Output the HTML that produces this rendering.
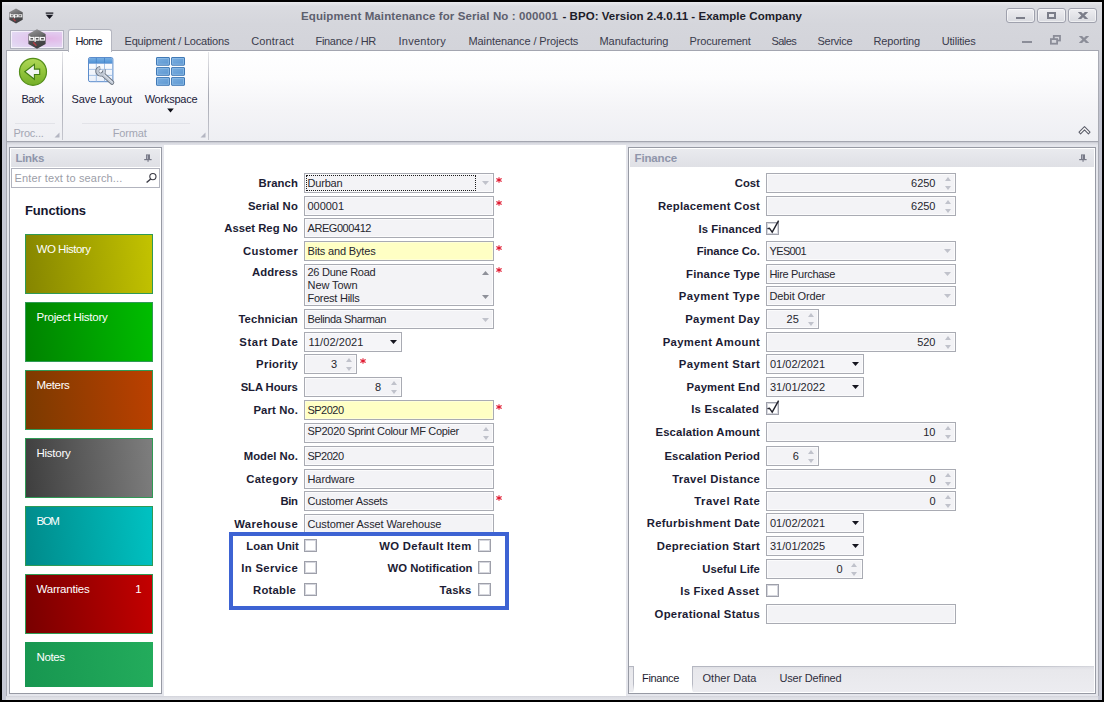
<!DOCTYPE html>
<html lang="en">
<head>
<meta charset="utf-8">
<title>Equipment Maintenance</title>
<style>
html,body{margin:0;padding:0;}
body{width:1104px;height:702px;background:#000;overflow:hidden;position:relative;font-family:"Liberation Sans",sans-serif;font-size:11px;}
.a{position:absolute;box-sizing:border-box;}
.t{position:absolute;white-space:pre;line-height:14px;font-family:"Liberation Sans",sans-serif;}
#win{left:2px;top:2px;width:1100px;height:698px;background:#d6d7dd;}
#titlegrad{left:2px;top:2px;width:1100px;height:48px;background:linear-gradient(#e9e9ed 0,#dadbe0 4px,#d5d6dc 22px,#d3d4da 48px);}
#frameL{left:2px;top:50px;width:4px;height:650px;background:linear-gradient(#cfd0d7 0,#c6c8d4 120px);}
#frameR{left:1098px;top:50px;width:4px;height:650px;background:linear-gradient(#cfd0d7 0,#c0c2ce 60px,#c6c8d4 300px);}
#under{left:6px;top:142px;width:1092px;height:558px;background:linear-gradient(#c6c8d0 0,#dadbe2 1.5px,#e5e6ec 3.5px);}
#ribbon{left:6px;top:50px;width:1093px;height:92px;background:linear-gradient(#ffffff 0,#fcfcfd 30%,#f4f4f7 65%,#eeeff3 100%);border:1px solid #a4a6b0;border-left-color:#a9abb4;border-right-color:#a9abb4;}
.gsep{top:52px;width:1px;height:88px;background:linear-gradient(rgba(170,172,182,0.3),#a8aab4 50%,rgba(170,172,182,0.6));}
.capline{height:1px;background:#e2e3e8;}
#hometab{left:68px;top:29px;width:44px;height:23px;background:#fff;border:1px solid #b4b6c0;border-bottom:none;border-radius:3px 3px 0 0;}
#appbtn{left:10px;top:30px;width:54px;height:19px;border:1px solid #b0b2be;background:radial-gradient(ellipse at 72% 45%,#e2b6e6 0,#e2c8ee 40%,#e2d6f2 75%,#e6e0f4 100%);box-shadow:inset 0 0 0 1px rgba(255,255,255,.65);}
.wbtn{top:8px;width:29px;height:15px;border:1px solid #9fa1ad;border-radius:3px;background:linear-gradient(#eeeef1,#d9dae0);box-shadow:inset 0 0 0 1px rgba(255,255,255,.55);}
.panel{background:#fff;border:1px solid #979aa4;}
.phead{background:linear-gradient(#e9eaee,#dfe0e5);}
#center{left:164px;top:145px;width:462px;height:551px;background:#fff;}
.f{position:absolute;box-sizing:border-box;height:20px;border:1px solid #a9abb3;background:#f3f3f6;box-shadow:inset 0 0 0 1px #fbfbfc;}
.f.y{background:#ffffc4;box-shadow:inset 0 0 0 1px #ffffd8;}
.f.d{background:#f5f5f8;}
.cb{position:absolute;box-sizing:border-box;width:13px;height:13px;border:1px solid #9ea0aa;background:#fff;box-shadow:inset 0 0 0 1px #d6d7de;}
.tile{position:absolute;box-sizing:border-box;left:25px;width:128px;height:60px;border:1px solid #2f9a55;}
svg{position:absolute;overflow:visible;}

</style>
</head>
<body>
<div class="a" id="win"></div>
<div class="a" id="titlegrad"></div>
<div class="a" id="frameL"></div><div class="a" id="frameR"></div>
<div class="a" id="under"></div>
<div class="a" style="left:6px;top:50px;width:1px;height:646px;background:#a9abb4"></div><div class="a" style="left:1098px;top:50px;width:1px;height:646px;background:#a9abb4"></div>
<div class="a" style="left:6px;top:696px;width:1092px;height:4px;background:linear-gradient(#cfd0d8 0,#dcdde3 1px,#e3e4e9 100%)"></div>
<svg style="left:9px;top:8px" width="14" height="16" viewBox="0 0 18 20"><defs><linearGradient id="hx9" x1="0" y1="0" x2="0.35" y2="1"><stop offset="0" stop-color="#929294"/><stop offset="0.38" stop-color="#666668"/><stop offset="0.62" stop-color="#4e4e50"/><stop offset="1" stop-color="#404042"/></linearGradient></defs><polygon points="9,0.2 17.6,5.1 17.6,14.9 9,19.8 0.4,14.9 0.4,5.1" fill="url(#hx9)"/><polygon points="9,0.2 17.6,5.1 9,9.6 0.4,5.1" fill="#ffffff" fill-opacity="0.10"/><g fill="none" stroke="#f6f6f6" stroke-width="1.15"><rect x="1.7" y="8.4" width="3.9" height="2.7"/><path d="M1.7,6.7 V11.1"/><rect x="7.1" y="8.4" width="3.9" height="2.7"/><path d="M7.1,8.4 V12.9"/><rect x="12.5" y="8.4" width="3.9" height="2.7"/></g><path d="M5.2,13.4 L8.4,16.8" stroke="#a83c42" stroke-width="1.6"/></svg>
<svg style="left:45px;top:12px" width="9" height="8" viewBox="0 0 9 8"><rect x="0.7" y="0.5" width="7.6" height="1.2" fill="#0c0c14"/><polygon points="0.8,2.8 8.2,2.8 4.5,7" fill="#15151f"/></svg>
<span class="t" style="left:301.00px;top:8.82px;font-size:11.5px;color:#5d5f6e;font-weight:bold;letter-spacing:0.104px;">Equipment Maintenance for Serial No : 000001</span>
<span class="t" style="left:562.50px;top:8.82px;font-size:11.5px;color:#1d1d2a;font-weight:bold;letter-spacing:0.042px;">- BPO: Version 2.4.0.11 - Example Company</span>
<div class="a wbtn" style="left:1006px"></div>
<div class="a wbtn" style="left:1037px"></div>
<div class="a wbtn" style="left:1068px"></div>
<div class="a" style="left:1016px;top:17px;width:9px;height:2px;background:#7b7d89"></div>
<div class="a" style="left:1047px;top:12px;width:9px;height:7px;border:2px solid #7b7d89"></div>
<svg style="left:1078px;top:12px;overflow:hidden" width="10" height="7" viewBox="0 0 10 7"><path d="M0.4,-1 L9.6,8 M9.6,-1 L0.4,8" stroke="#7b7d89" stroke-width="2.5"/></svg>
<div class="a" style="left:1022px;top:41px;width:10px;height:2px;background:#8b8d98"></div>
<svg style="left:1050px;top:35px" width="11" height="10" viewBox="0 0 11 10"><rect x="3.8" y="0.9" width="6.2" height="4.6" fill="none" stroke="#8b8d98" stroke-width="1.8"/><rect x="0.9" y="4.1" width="6.2" height="4.6" fill="#d5d6dc" stroke="#8b8d98" stroke-width="1.8"/></svg>
<svg style="left:1079px;top:36px;overflow:hidden" width="10" height="7" viewBox="0 0 10 7"><path d="M0.4,-1 L9.6,8 M9.6,-1 L0.4,8" stroke="#8b8d98" stroke-width="2.3"/></svg>
<div class="a" id="ribbon"></div>
<div class="a" id="appbtn"></div>
<svg style="left:28px;top:29px" width="18" height="20" viewBox="0 0 18 20"><defs><linearGradient id="hx28" x1="0" y1="0" x2="0.35" y2="1"><stop offset="0" stop-color="#929294"/><stop offset="0.38" stop-color="#666668"/><stop offset="0.62" stop-color="#4e4e50"/><stop offset="1" stop-color="#404042"/></linearGradient></defs><polygon points="9,0.2 17.6,5.1 17.6,14.9 9,19.8 0.4,14.9 0.4,5.1" fill="url(#hx28)"/><polygon points="9,0.2 17.6,5.1 9,9.6 0.4,5.1" fill="#ffffff" fill-opacity="0.10"/><g fill="none" stroke="#f6f6f6" stroke-width="1.15"><rect x="1.7" y="8.4" width="3.9" height="2.7"/><path d="M1.7,6.7 V11.1"/><rect x="7.1" y="8.4" width="3.9" height="2.7"/><path d="M7.1,8.4 V12.9"/><rect x="12.5" y="8.4" width="3.9" height="2.7"/></g><path d="M5.2,13.4 L8.4,16.8" stroke="#a83c42" stroke-width="1.6"/></svg>
<div class="a" id="hometab"></div>
<span class="t" style="left:75.50px;top:33.69px;font-size:11px;color:#14142a;letter-spacing:-0.711px;">Home</span>
<span class="t" style="left:124.50px;top:33.69px;font-size:11px;color:#3a3b4c;letter-spacing:-0.196px;">Equipment / Locations</span>
<span class="t" style="left:251.25px;top:33.69px;font-size:11px;color:#3a3b4c;letter-spacing:0.146px;">Contract</span>
<span class="t" style="left:315.50px;top:33.69px;font-size:11px;color:#3a3b4c;letter-spacing:-0.309px;">Finance / HR</span>
<span class="t" style="left:398.50px;top:33.69px;font-size:11px;color:#3a3b4c;letter-spacing:0.250px;">Inventory</span>
<span class="t" style="left:468.50px;top:33.69px;font-size:11px;color:#3a3b4c;letter-spacing:-0.097px;">Maintenance / Projects</span>
<span class="t" style="left:599.50px;top:33.69px;font-size:11px;color:#3a3b4c;letter-spacing:-0.075px;">Manufacturing</span>
<span class="t" style="left:689.50px;top:33.69px;font-size:11px;color:#3a3b4c;letter-spacing:-0.158px;">Procurement</span>
<span class="t" style="left:771.50px;top:33.69px;font-size:11px;color:#3a3b4c;letter-spacing:-0.556px;">Sales</span>
<span class="t" style="left:817.50px;top:33.69px;font-size:11px;color:#3a3b4c;letter-spacing:-0.277px;">Service</span>
<span class="t" style="left:873.50px;top:33.69px;font-size:11px;color:#3a3b4c;letter-spacing:-0.134px;">Reporting</span>
<span class="t" style="left:941.75px;top:33.69px;font-size:11px;color:#3a3b4c;letter-spacing:-0.189px;">Utilities</span>
<div class="a gsep" style="left:62px"></div>
<div class="a gsep" style="left:208px"></div>
<div class="a capline" style="left:15px;top:123px;width:40px"></div>
<div class="a capline" style="left:82px;top:123px;width:108px"></div>
<span class="t" style="left:13.50px;top:125.69px;font-size:11px;color:#a3a6b3;letter-spacing:-0.257px;">Proc...</span>
<span class="t" style="left:112.70px;top:125.69px;font-size:11px;color:#a3a6b3;letter-spacing:-0.141px;">Format</span>
<svg style="left:54px;top:132px" width="6" height="6" viewBox="0 0 6 6"><polygon points="5.5,0.5 5.5,5.5 0.5,5.5" fill="#b4b6c2"/></svg>
<svg style="left:200px;top:132px" width="6" height="6" viewBox="0 0 6 6"><polygon points="5.5,0.5 5.5,5.5 0.5,5.5" fill="#b4b6c2"/></svg>
<svg style="left:18px;top:57px" width="30" height="30" viewBox="0 0 30 30">
<defs><linearGradient id="gb" x1="0" y1="0" x2="0" y2="1"><stop offset="0" stop-color="#b0d858"/><stop offset="0.5" stop-color="#92c43c"/><stop offset="1" stop-color="#74ae28"/></linearGradient></defs>
<circle cx="15" cy="14.8" r="13.5" fill="url(#gb)" stroke="#548e1a" stroke-width="1.2"/>
<path d="M6.8,14.8 L16.4,7.4 L16.4,12.1 L21.7,12.1 L21.7,17.5 L16.4,17.5 L16.4,22.3 Z" fill="#f2f5f4" stroke="#3f7c12" stroke-width="1.1" stroke-linejoin="miter"/>
</svg>
<span class="t" style="left:21.50px;top:91.79px;font-size:11px;color:#1b1b3a;letter-spacing:-0.567px;">Back</span>
<svg style="left:88px;top:57px" width="30" height="30" viewBox="0 0 30 30">
<defs><linearGradient id="gh" x1="0" y1="0" x2="0" y2="1"><stop offset="0" stop-color="#78aee2"/><stop offset="1" stop-color="#4f92d6"/></linearGradient>
<linearGradient id="gc" x1="0" y1="0" x2="0" y2="1"><stop offset="0" stop-color="#ffffff"/><stop offset="1" stop-color="#eaf0fa"/></linearGradient></defs>
<rect x="0.5" y="0.5" width="24.4" height="24.2" rx="1.6" fill="url(#gc)" stroke="#5b8ccc"/>
<path d="M1,2 Q1,1 2,1 H23.4 Q24.4,1 24.4,2 V6.2 H1 Z" fill="url(#gh)"/>
<path d="M8.3,6.2 V24.4 M16.5,6.2 V24.4 M1,12.4 H24.4 M1,18.4 H24.4" stroke="#9dbbe2" stroke-width="0.9" fill="none"/>
<path d="M8.3,1 V6.2 M16.5,1 V6.2" stroke="#4684c8" stroke-width="0.9"/>
<path d="M1,6.4 H24.4" stroke="#6d9cd4" stroke-width="0.8"/>
<path d="M15.0,17.4 L24.0,25.5" stroke="#68707c" stroke-width="4.5" stroke-linecap="round"/>
<path d="M15.80,13.04 A3.4,3.4 0 1 1 12.24,10.82" fill="none" stroke="#68707c" stroke-width="3.9"/>
<path d="M15.0,17.4 L24.0,25.5" stroke="#c2cad6" stroke-width="2.9" stroke-linecap="round"/>
<path d="M15.9,12.7 A3.4,3.4 0 1 1 11.9,10.9" fill="none" stroke="#c2cad6" stroke-width="2.5"/>
<path d="M16.4,18.0 L24.3,25.1" stroke="#e4e9f0" stroke-width="0.9" stroke-linecap="round"/>
</svg>
<span class="t" style="left:71.50px;top:91.79px;font-size:11px;color:#1b1b3a;letter-spacing:-0.060px;">Save Layout</span>
<svg style="left:156px;top:57px" width="30" height="30" viewBox="0 0 30 30"><defs><linearGradient id="gw" x1="0" y1="0" x2="1" y2="1"><stop offset="0" stop-color="#7aaee0"/><stop offset="1" stop-color="#5c96d0"/></linearGradient></defs><rect x="0.5" y="0.5" width="12.9" height="7.7" rx="0.4" fill="url(#gw)" stroke="#4079b6" stroke-width="1"/><rect x="1.5" y="1.5" width="10.9" height="5.7" fill="none" stroke="#a6cdf0" stroke-opacity="0.55" stroke-width="0.9"/><rect x="0.5" y="10.6" width="12.9" height="7.7" rx="0.4" fill="url(#gw)" stroke="#4079b6" stroke-width="1"/><rect x="1.5" y="11.6" width="10.9" height="5.7" fill="none" stroke="#a6cdf0" stroke-opacity="0.55" stroke-width="0.9"/><rect x="0.5" y="20.6" width="12.9" height="7.7" rx="0.4" fill="url(#gw)" stroke="#4079b6" stroke-width="1"/><rect x="1.5" y="21.6" width="10.9" height="5.7" fill="none" stroke="#a6cdf0" stroke-opacity="0.55" stroke-width="0.9"/><rect x="15.6" y="0.5" width="12.9" height="7.7" rx="0.4" fill="url(#gw)" stroke="#4079b6" stroke-width="1"/><rect x="16.6" y="1.5" width="10.9" height="5.7" fill="none" stroke="#a6cdf0" stroke-opacity="0.55" stroke-width="0.9"/><rect x="15.6" y="10.6" width="12.9" height="7.7" rx="0.4" fill="url(#gw)" stroke="#4079b6" stroke-width="1"/><rect x="16.6" y="11.6" width="10.9" height="5.7" fill="none" stroke="#a6cdf0" stroke-opacity="0.55" stroke-width="0.9"/><rect x="15.6" y="20.6" width="12.9" height="7.7" rx="0.4" fill="url(#gw)" stroke="#4079b6" stroke-width="1"/><rect x="16.6" y="21.6" width="10.9" height="5.7" fill="none" stroke="#a6cdf0" stroke-opacity="0.55" stroke-width="0.9"/></svg>
<span class="t" style="left:144.70px;top:91.79px;font-size:11px;color:#1b1b3a;letter-spacing:-0.248px;">Workspace</span>
<svg style="left:167px;top:108px" width="7" height="5" viewBox="0 0 7 5"><polygon points="0.2,0.6 6.8,0.6 3.5,4.4" fill="#101018"/></svg>
<svg style="left:1078px;top:125px" width="13" height="11" viewBox="0 0 13 11"><path d="M1,7.2 L6.5,1.6 L12,7.2 L10.4,8.8 L6.5,4.9 L2.6,8.8 Z" fill="#fff" stroke="#5c5e6a" stroke-width="1.1" stroke-linejoin="round"/></svg>
<div class="a panel" style="left:9px;top:147px;width:153px;height:547px"></div>
<div class="a phead" style="left:11px;top:149px;width:149px;height:18px"></div>
<span class="t" style="left:15.50px;top:151.02px;font-size:11.5px;color:#8f95aa;font-weight:bold;letter-spacing:-0.309px;">Links</span>
<svg style="left:143.4px;top:153.4px" width="10" height="10" viewBox="0 0 10 10"><rect x="3" y="1.4" width="4" height="4.8" fill="#777987"/><rect x="3.9" y="2.3" width="1.0" height="3.7" fill="#b2b4c0"/><rect x="1.2" y="6" width="7.4" height="1.2" fill="#777987"/><rect x="4.5" y="7" width="1.1" height="1.8" fill="#777987"/></svg>
<div class="a" style="left:11px;top:168px;width:149px;height:20px;border:1px solid #b2b4be;background:#fff"></div>
<span class="t" style="left:14.50px;top:171.19px;font-size:11px;color:#9c9ea8;letter-spacing:0.149px;">Enter text to search...</span>
<svg style="left:145px;top:171px" width="13" height="13" viewBox="0 0 13 13"><circle cx="7.9" cy="5.6" r="3.1" fill="none" stroke="#3a3a44" stroke-width="1.1"/><path d="M5.7,7.9 L1.6,11.6" stroke="#3a3a44" stroke-width="1.4"/></svg>
<span class="t" style="left:25.00px;top:203.60px;font-size:13px;color:#15152e;font-weight:bold;letter-spacing:-0.145px;">Functions</span>
<div class="tile" style="top:234px;height:60px;background:linear-gradient(84deg,#858500,#c3c300);"></div>
<span class="t" style="left:36.50px;top:242.02px;font-size:11.5px;color:#fff;letter-spacing:-0.478px;">WO History</span>
<div class="tile" style="top:302px;height:60px;background:linear-gradient(84deg,#008200,#00bd00);"></div>
<span class="t" style="left:36.50px;top:310.02px;font-size:11.5px;color:#fff;letter-spacing:-0.252px;">Project History</span>
<div class="tile" style="top:370px;height:60px;background:linear-gradient(84deg,#7a3a00,#bc4000);"></div>
<span class="t" style="left:36.50px;top:378.02px;font-size:11.5px;color:#fff;letter-spacing:-0.359px;">Meters</span>
<div class="tile" style="top:438px;height:60px;background:linear-gradient(84deg,#3e3e3e,#7e7e7e);"></div>
<span class="t" style="left:36.50px;top:446.02px;font-size:11.5px;color:#fff;letter-spacing:-0.254px;">History</span>
<div class="tile" style="top:506px;height:60px;background:linear-gradient(84deg,#008a8a,#00c2c2);"></div>
<span class="t" style="left:36.50px;top:514.02px;font-size:11.5px;color:#fff;letter-spacing:-1.401px;">BOM</span>
<div class="tile" style="top:574px;height:60px;background:linear-gradient(84deg,#780000,#c40000);"></div>
<span class="t" style="left:36.50px;top:582.02px;font-size:11.5px;color:#fff;letter-spacing:-0.217px;">Warranties</span>
<div class="tile" style="top:642px;height:45px;background:linear-gradient(84deg,#179650,#23ac5c);border:none;"></div>
<span class="t" style="left:36.50px;top:650.02px;font-size:11.5px;color:#fff;letter-spacing:-0.409px;">Notes</span>
<span class="t" style="left:135.30px;top:582.02px;font-size:11.5px;color:#fff;">1</span>
<div class="a" id="center"></div>
<span class="t" style="left:258.40px;top:175.78px;font-size:11.3px;color:#1c1c34;font-weight:bold;letter-spacing:0.096px;">Branch</span>
<div class="f " style="left:304px;top:173px;width:190px;height:20px"></div>
<span class="t" style="left:307.50px;top:175.89px;font-size:11px;color:#26262e;letter-spacing:-0.180px;">Durban</span>
<div class="a" style="left:306px;top:175px;width:170px;height:16px;border:1px dotted #1a1a1a"></div>
<svg style="left:482.0px;top:181.0px" width="7" height="4" viewBox="0 0 7 4"><polygon points="0,0 7,0 3.5,4" fill="#c0c2cb"/></svg>
<svg style="left:496.4px;top:177.2px" width="6" height="6" viewBox="0 0 7 7"><path d="M3.5,0.2 V6.8 M0.4,1.8 L6.6,5.2 M6.6,1.8 L0.4,5.2" stroke="#e01c32" stroke-width="1.25"/></svg>
<span class="t" style="left:247.91px;top:198.78px;font-size:11.3px;color:#1c1c34;font-weight:bold;letter-spacing:0.113px;">Serial No</span>
<div class="f " style="left:304px;top:196px;width:190px;height:20px"></div>
<span class="t" style="left:307.50px;top:198.89px;font-size:11px;color:#26262e;letter-spacing:-0.036px;">000001</span>
<svg style="left:496.4px;top:199.7px" width="6" height="6" viewBox="0 0 7 7"><path d="M3.5,0.2 V6.8 M0.4,1.8 L6.6,5.2 M6.6,1.8 L0.4,5.2" stroke="#e01c32" stroke-width="1.25"/></svg>
<span class="t" style="left:224.30px;top:220.78px;font-size:11.3px;color:#1c1c34;font-weight:bold;">Asset Reg No</span>
<div class="f " style="left:304px;top:218px;width:190px;height:20px"></div>
<span class="t" style="left:307.50px;top:220.89px;font-size:11px;color:#26262e;letter-spacing:-0.439px;">AREG000412</span>
<span class="t" style="left:243.08px;top:243.78px;font-size:11.3px;color:#1c1c34;font-weight:bold;letter-spacing:0.283px;">Customer</span>
<div class="f y" style="left:304px;top:241px;width:190px;height:20px"></div>
<span class="t" style="left:307.50px;top:243.89px;font-size:11px;color:#26262e;letter-spacing:-0.166px;">Bits and Bytes</span>
<svg style="left:496.4px;top:245.2px" width="6" height="6" viewBox="0 0 7 7"><path d="M3.5,0.2 V6.8 M0.4,1.8 L6.6,5.2 M6.6,1.8 L0.4,5.2" stroke="#e01c32" stroke-width="1.25"/></svg>
<span class="t" style="left:251.91px;top:265.38px;font-size:11.3px;color:#1c1c34;font-weight:bold;letter-spacing:0.112px;">Address</span>
<div class="f" style="left:304px;top:264px;width:190px;height:42px"></div>
<span class="t" style="left:307.50px;top:264.99px;font-size:11px;color:#26262e;letter-spacing:-0.246px;">26 Dune Road</span>
<span class="t" style="left:307.50px;top:277.99px;font-size:11px;color:#26262e;letter-spacing:-0.068px;">New Town</span>
<span class="t" style="left:307.50px;top:290.99px;font-size:11px;color:#26262e;letter-spacing:-0.251px;">Forest Hills</span>
<svg style="left:481.5px;top:271.0px" width="7" height="4" viewBox="0 0 7 4"><polygon points="0,4 7,4 3.5,0" fill="#8e9099"/></svg>
<svg style="left:481.5px;top:294.5px" width="7" height="4" viewBox="0 0 7 4"><polygon points="0,0 7,0 3.5,4" fill="#8e9099"/></svg>
<svg style="left:496.4px;top:267.2px" width="6" height="6" viewBox="0 0 7 7"><path d="M3.5,0.2 V6.8 M0.4,1.8 L6.6,5.2 M6.6,1.8 L0.4,5.2" stroke="#e01c32" stroke-width="1.25"/></svg>
<span class="t" style="left:238.43px;top:311.78px;font-size:11.3px;color:#1c1c34;font-weight:bold;letter-spacing:0.131px;">Technician</span>
<div class="f " style="left:304px;top:309px;width:190px;height:20px"></div>
<span class="t" style="left:307.50px;top:311.89px;font-size:11px;color:#26262e;letter-spacing:-0.393px;">Belinda Sharman</span>
<svg style="left:482.0px;top:317.5px" width="7" height="4" viewBox="0 0 7 4"><polygon points="0,0 7,0 3.5,4" fill="#c0c2cb"/></svg>
<span class="t" style="left:239.36px;top:334.78px;font-size:11.3px;color:#1c1c34;font-weight:bold;letter-spacing:0.562px;">Start Date</span>
<div class="f d" style="left:304px;top:332px;width:98px;height:20px"></div>
<span class="t" style="left:308.50px;top:334.89px;font-size:11px;color:#26262e;letter-spacing:0.075px;">11/02/2021</span>
<svg style="left:389.5px;top:340.0px" width="7" height="4" viewBox="0 0 7 4"><polygon points="0,0 7,0 3.5,4" fill="#15151f"/></svg>
<span class="t" style="left:256.10px;top:356.78px;font-size:11.3px;color:#1c1c34;font-weight:bold;letter-spacing:0.305px;">Priority</span>
<div class="f " style="left:304px;top:354px;width:53px;height:20px"></div>
<span class="t" style="left:330.88px;top:356.89px;font-size:11px;color:#26262e;">3</span>
<svg style="left:345.5px;top:357.5px" width="6" height="4" viewBox="0 0 6 4"><polygon points="0,4 6,4 3.0,0" fill="#c0c2cb"/></svg><svg style="left:345.5px;top:366.5px" width="6" height="4" viewBox="0 0 6 4"><polygon points="0,0 6,0 3.0,4" fill="#c0c2cb"/></svg>
<svg style="left:359.9px;top:358.2px" width="6" height="6" viewBox="0 0 7 7"><path d="M3.5,0.2 V6.8 M0.4,1.8 L6.6,5.2 M6.6,1.8 L0.4,5.2" stroke="#e01c32" stroke-width="1.25"/></svg>
<span class="t" style="left:240.69px;top:379.78px;font-size:11.3px;color:#1c1c34;font-weight:bold;letter-spacing:-0.106px;">SLA Hours</span>
<div class="f " style="left:304px;top:377px;width:98px;height:20px"></div>
<span class="t" style="left:374.88px;top:379.89px;font-size:11px;color:#26262e;">8</span>
<svg style="left:390.8px;top:380.5px" width="6" height="4" viewBox="0 0 6 4"><polygon points="0,4 6,4 3.0,0" fill="#c0c2cb"/></svg><svg style="left:390.8px;top:389.5px" width="6" height="4" viewBox="0 0 6 4"><polygon points="0,0 6,0 3.0,4" fill="#c0c2cb"/></svg>
<span class="t" style="left:253.45px;top:402.78px;font-size:11.3px;color:#1c1c34;font-weight:bold;letter-spacing:0.148px;">Part No.</span>
<div class="f y" style="left:304px;top:400px;width:190px;height:20px"></div>
<span class="t" style="left:307.50px;top:402.89px;font-size:11px;color:#26262e;letter-spacing:-0.526px;">SP2020</span>
<svg style="left:496.4px;top:404.2px" width="6" height="6" viewBox="0 0 7 7"><path d="M3.5,0.2 V6.8 M0.4,1.8 L6.6,5.2 M6.6,1.8 L0.4,5.2" stroke="#e01c32" stroke-width="1.25"/></svg>
<div class="f " style="left:304px;top:423px;width:190px;height:20px"></div>
<span class="t" style="left:307.50px;top:424.49px;font-size:11px;color:#26262e;letter-spacing:-0.317px;">SP2020 Sprint Colour MF Copier</span>
<svg style="left:482.5px;top:426.5px" width="6" height="4" viewBox="0 0 6 4"><polygon points="0,4 6,4 3.0,0" fill="#c0c2cb"/></svg><svg style="left:482.5px;top:435.5px" width="6" height="4" viewBox="0 0 6 4"><polygon points="0,0 6,0 3.0,4" fill="#c0c2cb"/></svg>
<span class="t" style="left:243.80px;top:448.78px;font-size:11.3px;color:#1c1c34;font-weight:bold;">Model No.</span>
<div class="f " style="left:304px;top:446px;width:190px;height:20px"></div>
<span class="t" style="left:307.50px;top:448.89px;font-size:11px;color:#26262e;letter-spacing:-0.526px;">SP2020</span>
<span class="t" style="left:246.18px;top:471.78px;font-size:11.3px;color:#1c1c34;font-weight:bold;letter-spacing:0.379px;">Category</span>
<div class="f " style="left:304px;top:469px;width:190px;height:20px"></div>
<span class="t" style="left:307.50px;top:471.89px;font-size:11px;color:#26262e;letter-spacing:-0.086px;">Hardware</span>
<span class="t" style="left:280.40px;top:493.78px;font-size:11.3px;color:#1c1c34;font-weight:bold;letter-spacing:-0.401px;">Bin</span>
<div class="f " style="left:304px;top:491px;width:190px;height:20px"></div>
<span class="t" style="left:307.50px;top:493.89px;font-size:11px;color:#26262e;letter-spacing:-0.209px;">Customer Assets</span>
<svg style="left:496.4px;top:494.7px" width="6" height="6" viewBox="0 0 7 7"><path d="M3.5,0.2 V6.8 M0.4,1.8 L6.6,5.2 M6.6,1.8 L0.4,5.2" stroke="#e01c32" stroke-width="1.25"/></svg>
<span class="t" style="left:234.19px;top:516.78px;font-size:11.3px;color:#1c1c34;font-weight:bold;letter-spacing:0.391px;">Warehouse</span>
<div class="f " style="left:304px;top:514px;width:190px;height:20px"></div>
<span class="t" style="left:307.50px;top:516.89px;font-size:11px;color:#26262e;letter-spacing:-0.114px;">Customer Asset Warehouse</span>
<span class="t" style="left:246.35px;top:538.88px;font-size:11.3px;color:#1c1c34;font-weight:bold;letter-spacing:0.045px;">Loan Unit</span>
<div class="cb" style="left:304px;top:539px"></div>
<span class="t" style="left:379.15px;top:538.88px;font-size:11.3px;color:#1c1c34;font-weight:bold;letter-spacing:0.350px;">WO Default Item</span>
<div class="cb" style="left:478px;top:539px"></div>
<span class="t" style="left:241.33px;top:560.88px;font-size:11.3px;color:#1c1c34;font-weight:bold;letter-spacing:0.331px;">In Service</span>
<div class="cb" style="left:304px;top:561px"></div>
<span class="t" style="left:387.52px;top:560.88px;font-size:11.3px;color:#1c1c34;font-weight:bold;letter-spacing:0.019px;">WO Notification</span>
<div class="cb" style="left:478px;top:561px"></div>
<span class="t" style="left:253.02px;top:582.88px;font-size:11.3px;color:#1c1c34;font-weight:bold;letter-spacing:0.223px;">Rotable</span>
<div class="cb" style="left:304px;top:583px"></div>
<span class="t" style="left:439.62px;top:582.88px;font-size:11.3px;color:#1c1c34;font-weight:bold;letter-spacing:0.119px;">Tasks</span>
<div class="cb" style="left:478px;top:583px"></div>
<div class="a" style="left:229px;top:532px;width:280px;height:78px;border:4px solid #3d63d3"></div>
<div class="a panel" style="left:628px;top:147px;width:468px;height:547px"></div>
<div class="a phead" style="left:630px;top:149px;width:464px;height:18px"></div>
<span class="t" style="left:634.50px;top:151.02px;font-size:11.5px;color:#8f95aa;font-weight:bold;letter-spacing:-0.138px;">Finance</span>
<svg style="left:1078px;top:153px" width="10" height="10" viewBox="0 0 10 10"><rect x="3" y="1.4" width="4" height="4.8" fill="#777987"/><rect x="3.9" y="2.3" width="1.0" height="3.7" fill="#b2b4c0"/><rect x="1.2" y="6" width="7.4" height="1.2" fill="#777987"/><rect x="4.5" y="7" width="1.1" height="1.8" fill="#777987"/></svg>
<span class="t" style="left:734.77px;top:175.78px;font-size:11.3px;color:#1c1c34;font-weight:bold;letter-spacing:-0.027px;">Cost</span>
<div class="f " style="left:766px;top:173px;width:190px;height:20px"></div>
<span class="t" style="left:911.02px;top:175.89px;font-size:11px;color:#26262e;">6250</span>
<svg style="left:944.5px;top:176.5px" width="6" height="4" viewBox="0 0 6 4"><polygon points="0,4 6,4 3.0,0" fill="#c0c2cb"/></svg><svg style="left:944.5px;top:185.5px" width="6" height="4" viewBox="0 0 6 4"><polygon points="0,0 6,0 3.0,4" fill="#c0c2cb"/></svg>
<span class="t" style="left:658.01px;top:198.78px;font-size:11.3px;color:#1c1c34;font-weight:bold;letter-spacing:0.215px;">Replacement Cost</span>
<div class="f " style="left:766px;top:196px;width:190px;height:20px"></div>
<span class="t" style="left:911.02px;top:198.89px;font-size:11px;color:#26262e;">6250</span>
<svg style="left:944.5px;top:199.5px" width="6" height="4" viewBox="0 0 6 4"><polygon points="0,4 6,4 3.0,0" fill="#c0c2cb"/></svg><svg style="left:944.5px;top:208.5px" width="6" height="4" viewBox="0 0 6 4"><polygon points="0,0 6,0 3.0,4" fill="#c0c2cb"/></svg>
<span class="t" style="left:698.58px;top:221.58px;font-size:11.3px;color:#1c1c34;font-weight:bold;letter-spacing:0.077px;">Is Financed</span>
<div class="cb" style="left:766px;top:222px"></div>
<svg style="left:766px;top:220px" width="16" height="16" viewBox="0 0 16 16"><path d="M1.4,8.6 L3.4,8.2 L6.2,12.2 L12.6,0.6" fill="none" stroke="#22222c" stroke-width="1.4" stroke-linejoin="miter"/></svg>
<span class="t" style="left:696.71px;top:243.78px;font-size:11.3px;color:#1c1c34;font-weight:bold;letter-spacing:-0.094px;">Finance Co.</span>
<div class="f " style="left:766px;top:241px;width:190px;height:20px"></div>
<span class="t" style="left:769.50px;top:243.89px;font-size:11px;color:#26262e;letter-spacing:-0.646px;">YES001</span>
<svg style="left:944.0px;top:249.0px" width="7" height="4" viewBox="0 0 7 4"><polygon points="0,0 7,0 3.5,4" fill="#c0c2cb"/></svg>
<span class="t" style="left:686.02px;top:266.78px;font-size:11.3px;color:#1c1c34;font-weight:bold;letter-spacing:0.220px;">Finance Type</span>
<div class="f " style="left:766px;top:264px;width:190px;height:20px"></div>
<span class="t" style="left:769.50px;top:266.89px;font-size:11px;color:#26262e;letter-spacing:-0.323px;">Hire Purchase</span>
<svg style="left:944.0px;top:272.0px" width="7" height="4" viewBox="0 0 7 4"><polygon points="0,0 7,0 3.5,4" fill="#c0c2cb"/></svg>
<span class="t" style="left:678.78px;top:288.78px;font-size:11.3px;color:#1c1c34;font-weight:bold;letter-spacing:0.478px;">Payment Type</span>
<div class="f " style="left:766px;top:286px;width:190px;height:20px"></div>
<span class="t" style="left:769.50px;top:288.89px;font-size:11px;color:#26262e;letter-spacing:-0.124px;">Debit Order</span>
<svg style="left:944.0px;top:294.0px" width="7" height="4" viewBox="0 0 7 4"><polygon points="0,0 7,0 3.5,4" fill="#c0c2cb"/></svg>
<span class="t" style="left:685.17px;top:311.78px;font-size:11.3px;color:#1c1c34;font-weight:bold;letter-spacing:0.368px;">Payment Day</span>
<div class="f " style="left:766px;top:309px;width:53px;height:20px"></div>
<span class="t" style="left:786.55px;top:311.89px;font-size:11px;color:#26262e;">25</span>
<svg style="left:807.5px;top:312.5px" width="6" height="4" viewBox="0 0 6 4"><polygon points="0,4 6,4 3.0,0" fill="#c0c2cb"/></svg><svg style="left:807.5px;top:321.5px" width="6" height="4" viewBox="0 0 6 4"><polygon points="0,0 6,0 3.0,4" fill="#c0c2cb"/></svg>
<span class="t" style="left:662.66px;top:334.78px;font-size:11.3px;color:#1c1c34;font-weight:bold;letter-spacing:0.358px;">Payment Amount</span>
<div class="f " style="left:766px;top:332px;width:190px;height:20px"></div>
<span class="t" style="left:917.14px;top:334.89px;font-size:11px;color:#26262e;">520</span>
<svg style="left:944.5px;top:335.5px" width="6" height="4" viewBox="0 0 6 4"><polygon points="0,4 6,4 3.0,0" fill="#c0c2cb"/></svg><svg style="left:944.5px;top:344.5px" width="6" height="4" viewBox="0 0 6 4"><polygon points="0,0 6,0 3.0,4" fill="#c0c2cb"/></svg>
<span class="t" style="left:678.73px;top:356.78px;font-size:11.3px;color:#1c1c34;font-weight:bold;letter-spacing:0.425px;">Payment Start</span>
<div class="f d" style="left:766px;top:354px;width:98px;height:20px"></div>
<span class="t" style="left:770.00px;top:356.89px;font-size:11px;color:#26262e;letter-spacing:-0.006px;">01/02/2021</span>
<svg style="left:851.8px;top:362.3px" width="7" height="4" viewBox="0 0 7 4"><polygon points="0,0 7,0 3.5,4" fill="#15151f"/></svg>
<span class="t" style="left:686.47px;top:379.78px;font-size:11.3px;color:#1c1c34;font-weight:bold;letter-spacing:0.175px;">Payment End</span>
<div class="f d" style="left:766px;top:377px;width:98px;height:20px"></div>
<span class="t" style="left:770.00px;top:379.89px;font-size:11px;color:#26262e;letter-spacing:-0.006px;">31/01/2022</span>
<svg style="left:851.8px;top:385.3px" width="7" height="4" viewBox="0 0 7 4"><polygon points="0,0 7,0 3.5,4" fill="#15151f"/></svg>
<span class="t" style="left:691.22px;top:401.58px;font-size:11.3px;color:#1c1c34;font-weight:bold;letter-spacing:0.224px;">Is Escalated</span>
<div class="cb" style="left:766px;top:402px"></div>
<svg style="left:766px;top:400px" width="16" height="16" viewBox="0 0 16 16"><path d="M1.4,8.6 L3.4,8.2 L6.2,12.2 L12.6,0.6" fill="none" stroke="#22222c" stroke-width="1.4" stroke-linejoin="miter"/></svg>
<span class="t" style="left:655.45px;top:424.78px;font-size:11.3px;color:#1c1c34;font-weight:bold;letter-spacing:0.153px;">Escalation Amount</span>
<div class="f " style="left:766px;top:422px;width:190px;height:20px"></div>
<span class="t" style="left:923.25px;top:424.89px;font-size:11px;color:#26262e;">10</span>
<svg style="left:944.5px;top:425.5px" width="6" height="4" viewBox="0 0 6 4"><polygon points="0,4 6,4 3.0,0" fill="#c0c2cb"/></svg><svg style="left:944.5px;top:434.5px" width="6" height="4" viewBox="0 0 6 4"><polygon points="0,0 6,0 3.0,4" fill="#c0c2cb"/></svg>
<span class="t" style="left:664.53px;top:448.78px;font-size:11.3px;color:#1c1c34;font-weight:bold;letter-spacing:0.029px;">Escalation Period</span>
<div class="f " style="left:766px;top:446px;width:53px;height:20px"></div>
<span class="t" style="left:792.67px;top:448.89px;font-size:11px;color:#26262e;">6</span>
<svg style="left:807.5px;top:449.5px" width="6" height="4" viewBox="0 0 6 4"><polygon points="0,4 6,4 3.0,0" fill="#c0c2cb"/></svg><svg style="left:807.5px;top:458.5px" width="6" height="4" viewBox="0 0 6 4"><polygon points="0,0 6,0 3.0,4" fill="#c0c2cb"/></svg>
<span class="t" style="left:672.14px;top:471.78px;font-size:11.3px;color:#1c1c34;font-weight:bold;letter-spacing:0.341px;">Travel Distance</span>
<div class="f " style="left:766px;top:469px;width:190px;height:20px"></div>
<span class="t" style="left:929.38px;top:471.89px;font-size:11px;color:#26262e;">0</span>
<svg style="left:944.5px;top:472.5px" width="6" height="4" viewBox="0 0 6 4"><polygon points="0,4 6,4 3.0,0" fill="#c0c2cb"/></svg><svg style="left:944.5px;top:481.5px" width="6" height="4" viewBox="0 0 6 4"><polygon points="0,0 6,0 3.0,4" fill="#c0c2cb"/></svg>
<span class="t" style="left:694.32px;top:493.78px;font-size:11.3px;color:#1c1c34;font-weight:bold;letter-spacing:0.518px;">Travel Rate</span>
<div class="f " style="left:766px;top:491px;width:190px;height:20px"></div>
<span class="t" style="left:929.38px;top:493.89px;font-size:11px;color:#26262e;">0</span>
<svg style="left:944.5px;top:494.5px" width="6" height="4" viewBox="0 0 6 4"><polygon points="0,4 6,4 3.0,0" fill="#c0c2cb"/></svg><svg style="left:944.5px;top:503.5px" width="6" height="4" viewBox="0 0 6 4"><polygon points="0,0 6,0 3.0,4" fill="#c0c2cb"/></svg>
<span class="t" style="left:646.64px;top:515.78px;font-size:11.3px;color:#1c1c34;font-weight:bold;letter-spacing:0.342px;">Refurbishment Date</span>
<div class="f d" style="left:766px;top:513px;width:98px;height:20px"></div>
<span class="t" style="left:770.00px;top:515.89px;font-size:11px;color:#26262e;letter-spacing:-0.006px;">01/02/2021</span>
<svg style="left:851.8px;top:521.3px" width="7" height="4" viewBox="0 0 7 4"><polygon points="0,0 7,0 3.5,4" fill="#15151f"/></svg>
<span class="t" style="left:656.64px;top:538.78px;font-size:11.3px;color:#1c1c34;font-weight:bold;letter-spacing:0.344px;">Depreciation Start</span>
<div class="f d" style="left:766px;top:536px;width:98px;height:20px"></div>
<span class="t" style="left:770.00px;top:538.89px;font-size:11px;color:#26262e;letter-spacing:-0.006px;">31/01/2025</span>
<svg style="left:851.8px;top:544.3px" width="7" height="4" viewBox="0 0 7 4"><polygon points="0,0 7,0 3.5,4" fill="#15151f"/></svg>
<span class="t" style="left:702.28px;top:561.78px;font-size:11.3px;color:#1c1c34;font-weight:bold;letter-spacing:-0.023px;">Useful Life</span>
<div class="f " style="left:766px;top:559px;width:97px;height:20px"></div>
<span class="t" style="left:836.38px;top:561.89px;font-size:11px;color:#26262e;">0</span>
<svg style="left:851.0px;top:562.5px" width="6" height="4" viewBox="0 0 6 4"><polygon points="0,4 6,4 3.0,0" fill="#c0c2cb"/></svg><svg style="left:851.0px;top:571.5px" width="6" height="4" viewBox="0 0 6 4"><polygon points="0,0 6,0 3.0,4" fill="#c0c2cb"/></svg>
<span class="t" style="left:680.25px;top:583.58px;font-size:11.3px;color:#1c1c34;font-weight:bold;letter-spacing:0.246px;">Is Fixed Asset</span>
<div class="cb" style="left:766px;top:584px"></div>
<span class="t" style="left:654.58px;top:606.78px;font-size:11.3px;color:#1c1c34;font-weight:bold;letter-spacing:0.281px;">Operational Status</span>
<div class="f " style="left:766px;top:604px;width:190px;height:20px"></div>
<div class="a" style="left:629px;top:665px;width:465px;height:27px;background:linear-gradient(#fff 0,#fff 1px,#dcdde3 1px,#e8e8ec 5px,#ececf0 100%);"></div><div class="a" style="left:629px;top:666px;width:465px;height:1px;background:linear-gradient(90deg,#b4b6c0 0,#b9bbc4 80%,#d6d7dd 100%)"></div>
<div class="a" style="left:633px;top:666px;width:60px;height:26px;background:#fff;border-left:1px solid #b6b8c2;border-right:1px solid #b6b8c2"></div><div class="a" style="left:633px;top:684px;width:60px;height:8px;background:linear-gradient(rgba(255,255,255,0),#fff);"></div>
<span class="t" style="left:642.00px;top:671.19px;font-size:11px;color:#1c1c30;letter-spacing:-0.306px;">Finance</span>
<span class="t" style="left:702.50px;top:671.19px;font-size:11px;color:#30303e;letter-spacing:0.019px;">Other Data</span>
<span class="t" style="left:779.50px;top:671.19px;font-size:11px;color:#30303e;letter-spacing:-0.184px;">User Defined</span>
</body>
</html>
